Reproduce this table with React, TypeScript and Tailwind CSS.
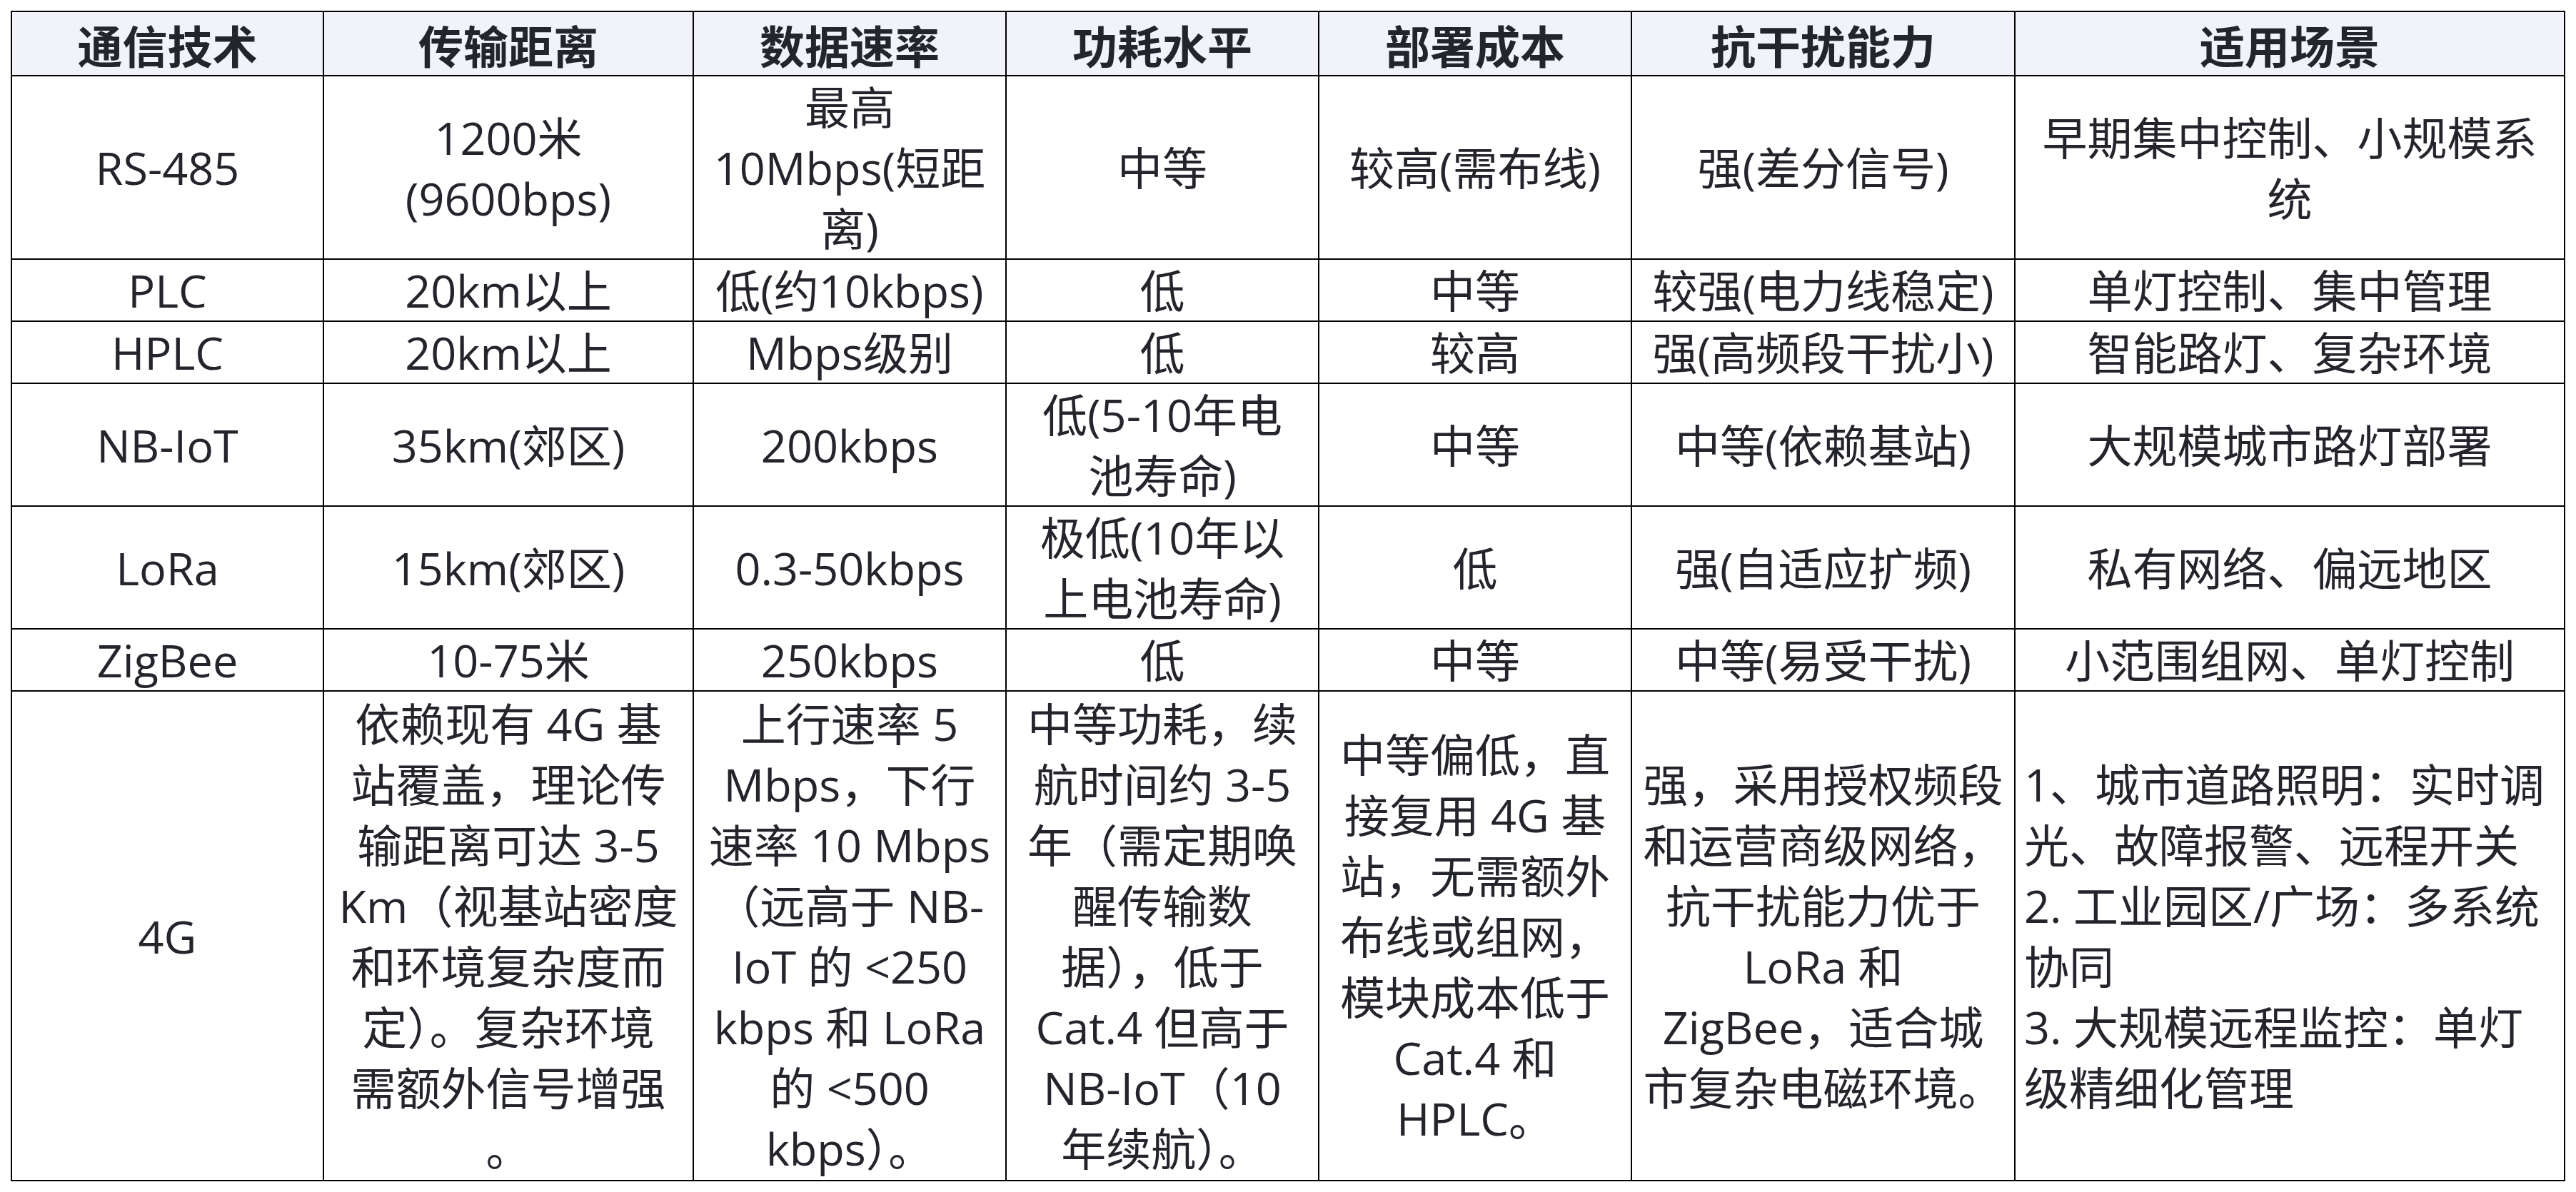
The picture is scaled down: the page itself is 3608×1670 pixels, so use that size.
const cols = [437, 518, 438, 438, 438, 537, 770];

const header = ['通信技术', '传输距离', '数据速率', '功耗水平', '部署成本', '抗干扰能力', '适用场景'];

// each cell is a list of lines, matching the wrap in the original
const rows: string[][][] = [
  [
    ['RS-485'],
    ['1200米', '(9600bps)'],
    ['最高', '10Mbps(短距', '离)'],
    ['中等'],
    ['较高(需布线)'],
    ['强(差分信号)'],
    ['早期集中控制、小规模系', '统'],
  ],
  [['PLC'], ['20km以上'], ['低(约10kbps)'], ['低'], ['中等'], ['较强(电力线稳定)'], ['单灯控制、集中管理']],
  [['HPLC'], ['20km以上'], ['Mbps级别'], ['低'], ['较高'], ['强(高频段干扰小)'], ['智能路灯、复杂环境']],
  [['NB-IoT'], ['35km(郊区)'], ['200kbps'], ['低(5-10年电', '池寿命)'], ['中等'], ['中等(依赖基站)'], ['大规模城市路灯部署']],
  [['LoRa'], ['15km(郊区)'], ['0.3-50kbps'], ['极低(10年以', '上电池寿命)'], ['低'], ['强(自适应扩频)'], ['私有网络、偏远地区']],
  [['ZigBee'], ['10-75米'], ['250kbps'], ['低'], ['中等'], ['中等(易受干扰)'], ['小范围组网、单灯控制']],
];

const row4g: string[][] = [
  ['4G'],
  ['依赖现有 4G 基', '站覆盖，理论传', '输距离可达 3-5', 'Km（视基站密度', '和环境复杂度而', '定）。复杂环境', '需额外信号增强', '。'],
  ['上行速率 5', 'Mbps，下行', '速率 10 Mbps', '（远高于 NB-', 'IoT 的 <250', 'kbps 和 LoRa', '的 <500', 'kbps）。'],
  ['中等功耗，续', '航时间约 3-5', '年（需定期唤', '醒传输数', '据），低于', 'Cat.4 但高于', 'NB-IoT（10', '年续航）。'],
  ['中等偏低，直', '接复用 4G 基', '站，无需额外', '布线或组网，', '模块成本低于', 'Cat.4 和', 'HPLC。'],
  ['强，采用授权频段', '和运营商级网络，', '抗干扰能力优于', 'LoRa 和', 'ZigBee，适合城', '市复杂电磁环境。'],
  ['1、城市道路照明：实时调', '光、故障报警、远程开关', '2. 工业园区/广场：多系统', '协同', '3. 大规模远程监控：单灯', '级精细化管理'],
];

const Lines = ({ lines }: { lines: string[] }) => (
  <>
    {lines.map((l, i) => (
      <div key={i} className="whitespace-pre">
        {l}
      </div>
    ))}
  </>
);

export default function App() {
  return (
    <div
      className="min-h-screen bg-white pl-[15px] pt-[15px] text-[#24252c]"
      style={{ fontFamily: '"Open Sans", "Noto Sans CJK SC", sans-serif' }}
    >
      <table className="table-fixed border-collapse border-2 border-black text-[63px] leading-[85px]">
        <colgroup>
          {cols.map((w, i) => (
            <col key={i} style={{ width: w }} />
          ))}
        </colgroup>
        <thead>
          <tr className="bg-[#f2f2fb]">
            {header.map((h) => (
              <th
                key={h}
                className="h-[90px] border-2 border-black p-0 text-center align-middle font-bold"
                style={{ fontFamily: '"Noto Sans CJK SC", sans-serif' }}
              >
                {h}
              </th>
            ))}
          </tr>
        </thead>
        <tbody>
          {rows.map((r, ri) => (
            <tr key={ri}>
              {r.map((c, ci) => (
                <td key={ci} className="border-2 border-black p-0 text-center align-middle">
                  <Lines lines={c} />
                </td>
              ))}
            </tr>
          ))}
          <tr>
            {row4g.map((c, ci) => (
              <td
                key={ci}
                className={
                  ci === 6
                    ? 'border-2 border-black px-[12px] py-[2px] text-left align-middle'
                    : 'border-2 border-black px-0 py-[2px] text-center align-middle'
                }
              >
                <Lines lines={c} />
              </td>
            ))}
          </tr>
        </tbody>
      </table>
    </div>
  );
}
